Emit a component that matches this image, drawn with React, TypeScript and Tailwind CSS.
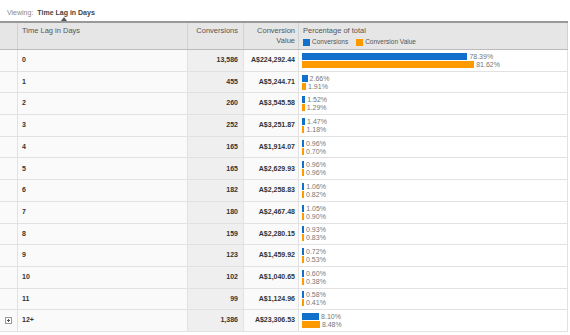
import React from "react"

type Row = {
  label: string
  conversions: string
  value: string
  convPct: number
  valuePct: number
  expandable?: boolean
}

const rows: Row[] = [
  { label: "0", conversions: "13,586", value: "A$224,292.44", convPct: 78.39, valuePct: 81.62 },
  { label: "1", conversions: "455", value: "A$5,244.71", convPct: 2.66, valuePct: 1.91 },
  { label: "2", conversions: "260", value: "A$3,545.58", convPct: 1.52, valuePct: 1.29 },
  { label: "3", conversions: "252", value: "A$3,251.87", convPct: 1.47, valuePct: 1.18 },
  { label: "4", conversions: "165", value: "A$1,914.07", convPct: 0.96, valuePct: 0.7 },
  { label: "5", conversions: "165", value: "A$2,629.93", convPct: 0.96, valuePct: 0.96 },
  { label: "6", conversions: "182", value: "A$2,258.83", convPct: 1.06, valuePct: 0.82 },
  { label: "7", conversions: "180", value: "A$2,467.48", convPct: 1.05, valuePct: 0.9 },
  { label: "8", conversions: "159", value: "A$2,280.15", convPct: 0.93, valuePct: 0.83 },
  { label: "9", conversions: "123", value: "A$1,459.92", convPct: 0.72, valuePct: 0.53 },
  { label: "10", conversions: "102", value: "A$1,040.65", convPct: 0.6, valuePct: 0.38 },
  { label: "11", conversions: "99", value: "A$1,124.96", convPct: 0.58, valuePct: 0.41 },
  { label: "12+", conversions: "1,386", value: "A$23,306.53", convPct: 8.1, valuePct: 8.48, expandable: true },
]

const BAR_FULL = 211

function Bar({ pct, color }: { pct: number; color: string }) {
  const width = Math.max(2, (pct * BAR_FULL) / 100)
  return (
    <div className="flex items-center h-[7px]">
      <div className={`h-full ${color}`} style={{ width }} />
      <span className="ml-[2px] text-[7px] leading-none text-[#777]">{pct.toFixed(2)}%</span>
    </div>
  )
}

function ExpandIcon() {
  return (
    <svg width="7" height="7" viewBox="0 0 7 7">
      <rect x="0.5" y="0.5" width="6" height="6" fill="#fff" stroke="#999" />
      <path d="M2 3.5h3M3.5 2v3" stroke="#555" strokeWidth="1" />
    </svg>
  )
}

export default function App() {
  return (
    <div className="w-[570px] h-[335px] bg-white font-['Liberation_Sans',Arial,sans-serif] text-[#333]">
      <div className="h-[21px] flex items-center pl-[7px] pt-[5px] text-[7px]">
        <span className="text-[#888]">Viewing:</span>
        <span className="relative ml-[4px] font-bold text-[#444]">
          Time Lag in Days
          <span className="absolute left-[24px] top-[9px] w-0 h-0 border-x-[3px] border-x-transparent border-b-[4px] border-b-[#555]" />
        </span>
      </div>

      <div className="w-[568px] border-t-2 border-[#999]">
        <div className="flex h-[27px] bg-[#e6e6e6] border-b border-[#bbb] text-[7.5px] text-[#555] leading-[10px]">
          <div className="w-[18px] border-r border-[#d2d2d2]" />
          <div className="w-[170px] border-r border-[#d2d2d2] pl-[4px] pt-[3px]">Time Lag in Days</div>
          <div className="w-[56px] border-r border-[#d2d2d2] pr-[5px] pt-[3px] text-right">Conversions</div>
          <div className="w-[55px] border-r border-[#d2d2d2] pr-[3px] pt-[3px] text-right">
            Conversion
            <br />
            Value
          </div>
          <div className="w-[269px] border-r border-[#d2d2d2] pl-[4px] pt-[3px]">
            <div>Percentage of total</div>
            <div className="flex items-center gap-[2px] text-[6.5px] mt-[1px]">
              <span className="w-[7px] h-[7px] bg-[#1170cc]" />
              <span>Conversions</span>
              <span className="w-[7px] h-[7px] bg-[#ff9900] ml-[6px]" />
              <span>Conversion Value</span>
            </div>
          </div>
        </div>

        {rows.map((row) => (
          <div key={row.label} className="flex h-[21.7px] border-b border-[#e2e2e2] text-[7px] font-bold">
            <div className="w-[18px] border-r border-[#e2e2e2] flex items-center justify-center bg-[#fafafa]">
              {row.expandable && <ExpandIcon />}
            </div>
            <div className="w-[170px] border-r border-[#e2e2e2] pl-[4px] flex items-center bg-[#fafafa]">{row.label}</div>
            <div className="w-[56px] border-r border-[#e2e2e2] pr-[5px] flex items-center justify-end bg-[#efefef]">
              {row.conversions}
            </div>
            <div className="w-[55px] border-r border-[#e2e2e2] pr-[3px] flex items-center justify-end bg-[#fafafa]">
              {row.value}
            </div>
            <div className="w-[269px] border-r border-[#e2e2e2] pl-[3px] flex flex-col justify-center gap-[1px] font-normal bg-white">
              <Bar pct={row.convPct} color="bg-[#1170cc]" />
              <Bar pct={row.valuePct} color="bg-[#ff9900]" />
            </div>
          </div>
        ))}
      </div>
    </div>
  )
}
